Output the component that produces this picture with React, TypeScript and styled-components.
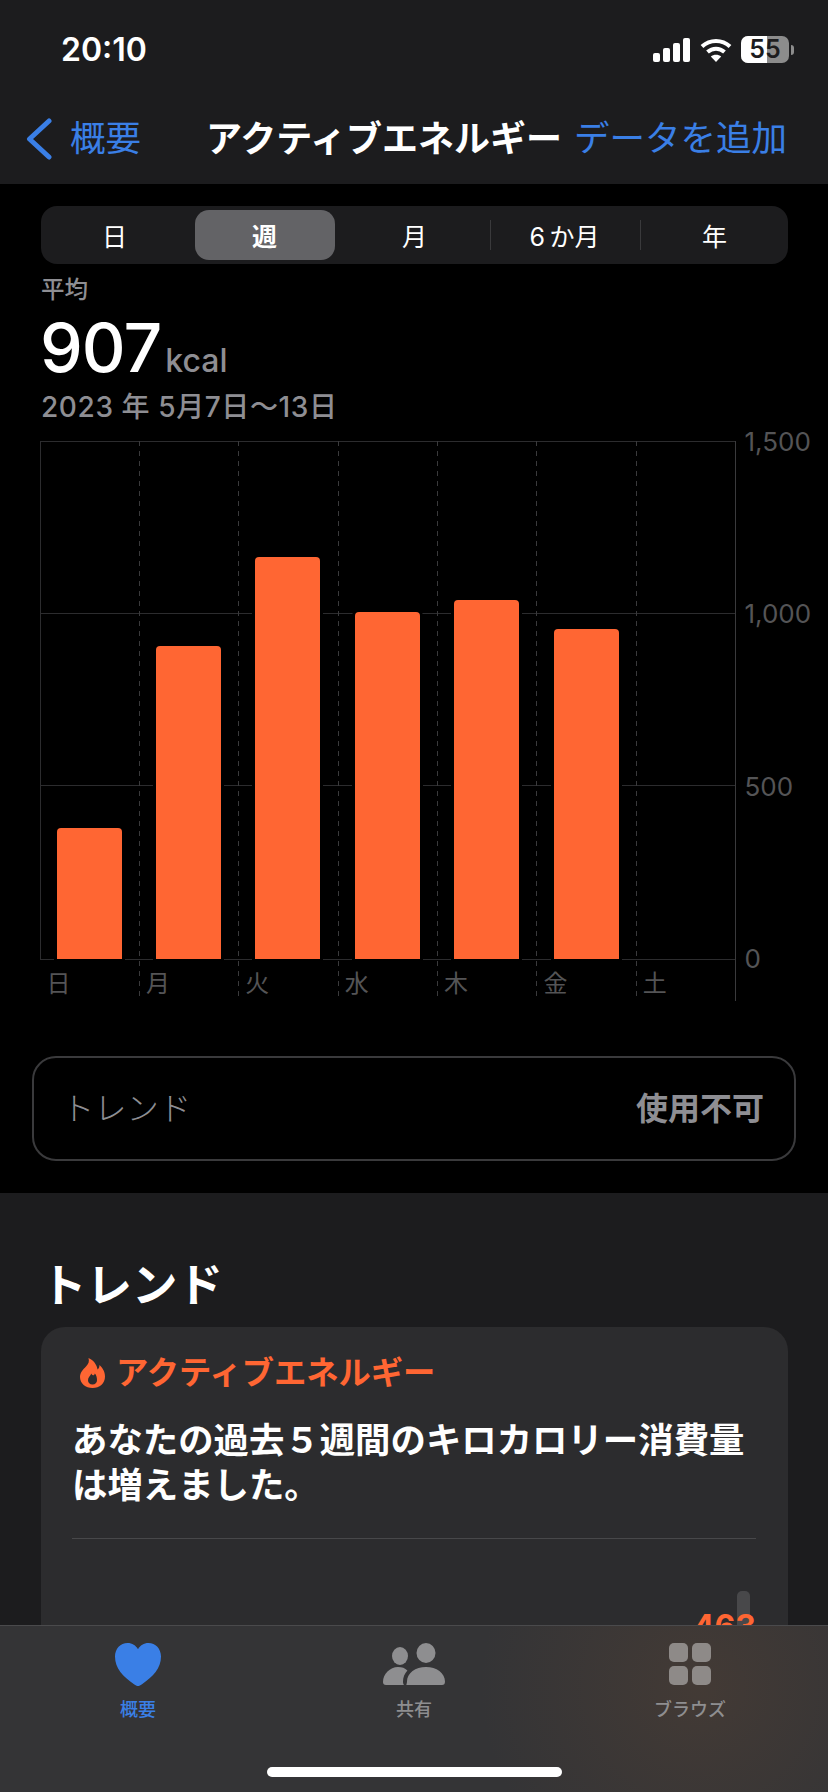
import { createGlobalStyle } from "styled-components";
import styled from "styled-components";

const font = `Inter, "Noto Sans CJK JP", sans-serif`;
const orange = "#ff6633";
const blue = "#3a7fe6";

const DAYS = ["日", "月", "火", "水", "木", "金", "土"];
const KCAL = [380, 906, 1164, 1006, 1040, 956, 0];
const TICKS = ["1,500", "1,000", "500", "0"];
const RANGES = ["日", "週", "月", "6\u2009か月", "年"];
const PLOT_HEIGHT = 518;

const GlobalStyle = createGlobalStyle`
  html, body {
    margin: 0;
    padding: 0;
    background: #000;
  }
  body {
    font-family: ${font};
  }
`;

export default function App() {
  return (
    <SPage>
      <GlobalStyle />
      <SHeader>
        <SStatusBar>
          <STime>20:10</STime>
          <SStatusIcons>
            <svg width="38" height="24" viewBox="0 0 38 24" fill="#fff">
              <rect x="0" y="15" width="7" height="9" rx="2" />
              <rect x="10" y="10" width="7" height="14" rx="2" />
              <rect x="20" y="5" width="7" height="19" rx="2" />
              <rect x="30" y="0" width="7" height="24" rx="2" />
            </svg>
            <svg width="32" height="24" viewBox="0 0 32 24" fill="none" stroke="#fff" strokeWidth="4">
              <path d="M2 8.5C10 1 22 1 30 8.5" />
              <path d="M7.5 14C12.5 9.5 19.5 9.5 24.5 14" />
              <path d="M16 24L10.8 18.6C13.6 16 18.4 16 21.2 18.6Z" fill="#fff" stroke="none" />
            </svg>
            <SBattery>
              <SBatteryFill />
              <SBatteryText>55</SBatteryText>
            </SBattery>
            <SBatteryCap />
          </SStatusIcons>
        </SStatusBar>
        <SNav>
          <SBack>
            <svg width="26" height="42" viewBox="0 0 26 42" fill="none" stroke={blue} strokeWidth="5" strokeLinecap="round" strokeLinejoin="round">
              <path d="M23 3L3.5 21L23 39" />
            </svg>
            概要
          </SBack>
          <STitle>アクティブエネルギー</STitle>
          <SAction>データを追加</SAction>
        </SNav>
      </SHeader>

      <SScroll>
        <SBlack>
          <STrack>
            {RANGES.map((r, i) => (
              <SSegment key={r} $active={i === 1} $divider={i === 3 || i === 4}>
                {i === 1 ? <SSelected>{r}</SSelected> : r}
              </SSegment>
            ))}
          </STrack>
          <SCaption>平均</SCaption>
          <SValueRow>
            <SValue>907</SValue>
            <SUnit>kcal</SUnit>
          </SValueRow>
          <SDate>2023 年 5月7日〜13日</SDate>

          <SChart>
            <SColumns>
              {DAYS.map((d, i) => (
                <SColumn key={d} $first={i === 0}>
                  <SPlot>
                    {KCAL[i] > 0 && <SBar style={{ height: (KCAL[i] / 1500) * PLOT_HEIGHT }} />}
                  </SPlot>
                  <SDay>{d}</SDay>
                </SColumn>
              ))}
            </SColumns>
            <SAxis>
              {TICKS.map((t) => (
                <STick key={t}>{t}</STick>
              ))}
            </SAxis>
          </SChart>

          <STrendBox>
            <STrendLabel>トレンド</STrendLabel>
            <STrendValue>使用不可</STrendValue>
          </STrendBox>
        </SBlack>

        <SHeading>トレンド</SHeading>
        <SCard>
          <SCardTitle>
            <svg width="25" height="30" viewBox="0 0 25 30" fill={orange}>
              <path
                fillRule="evenodd"
                d="M8.5 0C9.5 3.5 8.5 6 6 8.5C3 11.5 0 14.5 0 19C0 25.5 5.5 30 12.5 30C19.5 30 25 25.5 25 18.5C25 13 22 9.5 19.5 7C19.5 9 18.8 10.5 17.5 11.5C17 7 13.5 2 8.5 0ZM12.5 26.5C9.8 26.5 8 24.6 8 22.2C8 19.6 10.2 18 11.4 15.6C11.8 17 12.6 17.6 13.6 17.2C14.4 16.8 14.6 16 14.8 15.4C16.4 17 17 19.6 17 22.2C17 24.6 15.2 26.5 12.5 26.5Z"
              />
            </svg>
            アクティブエネルギー
          </SCardTitle>
          <SCardBody>あなたの過去５週間のキロカロリー消費量は増えました。</SCardBody>
          <SDivider />
          <SPeek>
            <SPeekBar />
            <SPeekValue>463</SPeekValue>
          </SPeek>
        </SCard>
      </SScroll>

      <STabBar>
        <STabs>
          <STab $active>
            <STabIcon>
              <svg width="46" height="43" viewBox="0 0 46 43" fill={blue}>
                <path d="M23 43C21.8 43 20.6 42.3 19 41.2C8 33.8 0 25.2 0 13.6C0 5.8 5.4 0 12.6 0C17.2 0 20.8 2.4 23 6.2C25.2 2.4 28.8 0 33.4 0C40.6 0 46 5.8 46 13.6C46 25.2 38 33.8 27 41.2C25.4 42.3 24.2 43 23 43Z" />
              </svg>
            </STabIcon>
            概要
          </STab>
          <STab>
            <STabIcon>
              <svg width="62" height="42" viewBox="0 0 62 42" fill="#8e8e90">
                <ellipse cx="17" cy="13" rx="8" ry="9" />
                <ellipse cx="43" cy="10" rx="9.5" ry="10" />
                <path d="M0 39C0 31 7 24 15 24C19 24 22 25.2 24.4 27.4C21.6 30.4 20 34.2 20 38.5C20 40 20.3 41 21 42H3C1 42 0 41 0 39Z" />
                <path d="M24 42C22.6 42 24 41 24 38.5C24 30 32.5 24 43 24C53.5 24 62 30 62 38.5C62 41 61 42 59 42Z" />
              </svg>
            </STabIcon>
            共有
          </STab>
          <STab>
            <STabIcon>
              <SBrowseGrid>
                <span />
                <span />
                <span />
                <span />
              </SBrowseGrid>
            </STabIcon>
            ブラウズ
          </STab>
        </STabs>
        <SHomeIndicator />
      </STabBar>
    </SPage>
  );
}

const SPage = styled.div`
  width: 828px;
  height: 1792px;
  display: flex;
  flex-direction: column;
  overflow: hidden;
  background: #1c1c1e;
  color: #fff;
  font-family: ${font};
`;

const SHeader = styled.header`
  height: 184px;
  flex: none;
  background: #1c1c1e;
`;

const SStatusBar = styled.div`
  height: 88px;
  display: flex;
  justify-content: space-between;
  padding: 34px 34px 0 61px;
  box-sizing: border-box;
`;

const STime = styled.div`
  font-size: 32px;
  line-height: 32px;
  font-weight: 600;
`;

const SStatusIcons = styled.div`
  display: flex;
  align-items: flex-start;
  padding-top: 4px;

  svg:nth-child(2) {
    margin: 0 9px;
  }
`;

const SBattery = styled.div`
  width: 48px;
  height: 27px;
  margin-top: -2px;
  border-radius: 7px;
  overflow: hidden;
  background: #8c8c8c;
  display: flex;
`;

const SBatteryFill = styled.div`
  width: 26px;
  flex: none;
  background: #fff;
`;

const SBatteryText = styled.div`
  width: 48px;
  flex: none;
  margin-left: -26px;
  text-align: center;
  color: #1c1c1e;
  font-size: 25px;
  line-height: 27px;
  font-weight: 600;
`;

const SBatteryCap = styled.div`
  width: 3px;
  height: 10px;
  margin: 7px 0 0 2px;
  border-radius: 0 3px 3px 0;
  background: #8c8c8c;
`;

const SNav = styled.nav`
  height: 96px;
  display: flex;
  align-items: flex-start;
  padding: 30px 41px 0 26px;
  box-sizing: border-box;
  font-size: 35.5px;
  line-height: 42px;
`;

const SBack = styled.div`
  display: flex;
  align-items: center;
  gap: 18px;
  color: ${blue};
`;

const STitle = styled.div`
  margin-left: 65px;
  font-size: 36px;
  font-weight: 600;
  white-space: nowrap;
`;

const SAction = styled.div`
  margin-left: auto;
  color: ${blue};
  white-space: nowrap;
`;

const SScroll = styled.main`
  flex: 1;
  min-height: 0;
  overflow: hidden;
`;

const SBlack = styled.section`
  height: 1009px;
  padding-top: 22px;
  box-sizing: border-box;
  background: #000;
`;

const STrack = styled.div`
  height: 58px;
  margin: 0 40px 0 41px;
  padding: 4px 0;
  box-sizing: border-box;
  display: grid;
  grid-template-columns: repeat(5, 150px);
  justify-content: center;
  border-radius: 16px;
  background: #1c1c1e;
`;

const SSegment = styled.div<{ $active: boolean; $divider: boolean }>`
  display: flex;
  align-items: center;
  justify-content: center;
  padding-bottom: 1px;
  box-sizing: border-box;
  font-size: 25px;
  font-weight: ${(p) => (p.$active ? 700 : 400)};
  color: #fff;
  ${(p) =>
    p.$divider &&
    `background: linear-gradient(#3a3a3c, #3a3a3c) left center / 1px 30px no-repeat;`}
`;

const SSelected = styled.div`
  width: 140px;
  height: 50px;
  margin-bottom: -1px;
  display: flex;
  align-items: center;
  justify-content: center;
  border-radius: 14px;
  background: #636366;
`;

const SCaption = styled.div`
  margin: 11px 0 0 41px;
  font-size: 23.5px;
  line-height: 30px;
  font-weight: 500;
  color: #8e8e93;
`;

const SValueRow = styled.div`
  margin: 8px 0 0 40px;
  display: flex;
  align-items: baseline;
  gap: 4px;
`;

const SValue = styled.div`
  font-size: 68px;
  line-height: 68px;
  font-weight: 500;
  letter-spacing: -1px;
`;

const SUnit = styled.div`
  font-size: 32px;
  font-weight: 500;
  color: #8e8e93;
`;

const SDate = styled.div`
  margin: 9px 0 0 41px;
  height: 34px;
  font-size: 28px;
  line-height: 34px;
  font-weight: 500;
  letter-spacing: 0.6px;
  color: #8e8e93;
`;

const SChart = styled.div`
  margin: 17px 0 0 39.6px;
  display: flex;
`;

const SColumns = styled.div`
  width: 695.5px;
  height: 560px;
  display: grid;
  grid-template-columns: repeat(7, 1fr);
  border-right: 1px solid #3a3a3c;
  background:
    linear-gradient(#2c2c2e, #2c2c2e) 0 0 / 100% 1px no-repeat,
    linear-gradient(#2c2c2e, #2c2c2e) 0 172px / 100% 1px no-repeat,
    linear-gradient(#2c2c2e, #2c2c2e) 0 344px / 100% 1px no-repeat,
    linear-gradient(#2c2c2e, #2c2c2e) 0 ${PLOT_HEIGHT}px / 100% 1px no-repeat;
`;

const SColumn = styled.div<{ $first: boolean }>`
  display: flex;
  flex-direction: column;
  background: ${(p) =>
    p.$first
      ? `linear-gradient(#2c2c2e, #2c2c2e) top left / 1px ${PLOT_HEIGHT}px no-repeat`
      : `repeating-linear-gradient(to bottom, #3a3a3c 0 5px, transparent 5px 10px) top left / 1px 100% no-repeat`};
`;

const SPlot = styled.div`
  height: ${PLOT_HEIGHT}px;
  flex: none;
  display: flex;
  align-items: flex-end;
  justify-content: center;
`;

const SBar = styled.div`
  width: 65px;
  border-radius: 4px 4px 0 0;
  background: ${orange};
  box-shadow: 0 0 0 3px #000;
`;

const SDay = styled.div`
  padding: 10px 0 0 7px;
  font-size: 24px;
  line-height: 30px;
  color: #545456;
`;

const SAxis = styled.div`
  height: ${PLOT_HEIGHT}px;
  margin-left: 8.4px;
  display: flex;
  flex-direction: column;
  justify-content: space-between;
`;

const STick = styled.div`
  height: 0;
  display: flex;
  align-items: center;
  font-size: 26px;
  color: #545456;
`;

const STrendBox = styled.div`
  height: 105px;
  margin: 55px 32px 0;
  padding: 0 30px 5px 28px;
  box-sizing: border-box;
  display: flex;
  align-items: center;
  justify-content: space-between;
  border: 2px solid #3a3a3c;
  border-radius: 24px;
`;

const STrendLabel = styled.div`
  font-size: 32.3px;
  font-weight: 300;
  color: #8e8e93;
`;

const STrendValue = styled.div`
  font-size: 32px;
  font-weight: 600;
  color: #8e8e93;
`;

const SHeading = styled.h2`
  margin: 68px 0 0 41px;
  font-size: 45.5px;
  line-height: 50px;
  font-weight: 700;
`;

const SCard = styled.section`
  margin: 16px 40px 0 41px;
  padding: 26px 32px 0 31px;
  border-radius: 24px;
  background: #2c2c2e;
  min-height: 400px;
`;

const SCardTitle = styled.div`
  display: flex;
  align-items: center;
  gap: 11px;
  padding-left: 8px;
  font-size: 32.3px;
  line-height: 40px;
  font-weight: 600;
  color: ${orange};
`;

const SCardBody = styled.p`
  margin: 25px 0 0;
  font-size: 35.4px;
  line-height: 45px;
  font-weight: 700;
`;

const SDivider = styled.hr`
  height: 1px;
  margin: 30px 0 0;
  border: 0;
  background: #48484a;
`;

const SPeek = styled.div`
  margin-top: 52px;
  display: flex;
  flex-direction: column;
  align-items: flex-end;
`;

const SPeekBar = styled.div`
  width: 13px;
  height: 60px;
  margin-right: 6px;
  border-radius: 5px 5px 0 0;
  background: #48484a;
`;

const SPeekValue = styled.div`
  margin: -44px 0 0 0;
  font-size: 32px;
  line-height: 40px;
  font-weight: 700;
  color: ${orange};
`;

const STabBar = styled.footer`
  height: 167px;
  flex: none;
  box-sizing: border-box;
  border-top: 1px solid #4a4a4c;
  background:
    radial-gradient(circle at 700px 60px, rgba(120, 80, 50, 0.22), rgba(120, 80, 50, 0) 220px),
    #343436;
  display: flex;
  flex-direction: column;
  align-items: center;
`;

const STabs = styled.div`
  width: 100%;
  padding-top: 16px;
  display: grid;
  grid-template-columns: repeat(3, 1fr);
`;

const STab = styled.div<{ $active?: boolean }>`
  display: flex;
  flex-direction: column;
  align-items: center;
  font-size: 18px;
  line-height: 24px;
  font-weight: 500;
  color: ${(p) => (p.$active ? blue : "#8e8e90")};
`;

const STabIcon = styled.div`
  height: 44px;
  margin-bottom: 12px;
  display: flex;
  align-items: center;
`;

const SBrowseGrid = styled.div`
  display: grid;
  grid-template-columns: 19px 19px;
  grid-template-rows: 19px 19px;
  gap: 4px;

  span {
    border-radius: 5px;
    background: #8e8a88;
  }
`;

const SHomeIndicator = styled.div`
  width: 295px;
  height: 10px;
  margin-top: 45px;
  border-radius: 5px;
  background: #fff;
`;
